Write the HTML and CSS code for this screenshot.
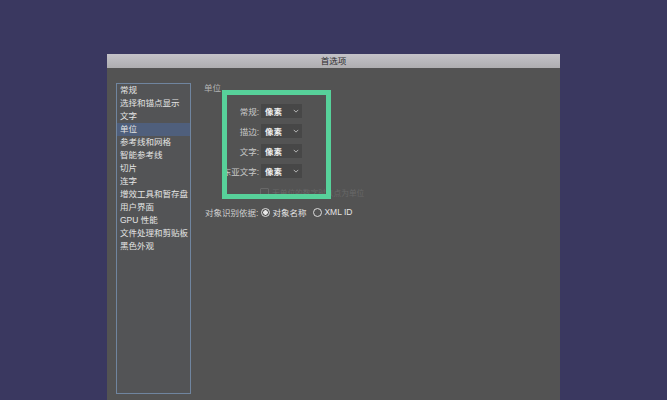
FILE: index.html
```html
<!DOCTYPE html>
<html lang="zh-CN">
<head>
  <meta charset="UTF-8">
  <title>首选项</title>
  <link rel="stylesheet" href="styles.css">
</head>
<body>
  <div class="window">
    <div class="titlebar">首选项</div>
    <div class="content">
      <ul class="sidebar">
        <li>常规</li>
        <li>选择和锚点显示</li>
        <li>文字</li>
        <li class="active">单位</li>
        <li>参考线和网格</li>
        <li>智能参考线</li>
        <li>切片</li>
        <li>连字</li>
        <li>增效工具和暂存盘</li>
        <li>用户界面</li>
        <li>GPU 性能</li>
        <li>文件处理和剪贴板</li>
        <li>黑色外观</li>
      </ul>
      <div class="panel">
        <div class="section-title">单位</div>
        <div class="rows">
          <div class="row"><span class="label">常规:</span><div class="select">像素<svg viewBox="0 0 8 5"><path d="M1 1l3 3 3-3"/></svg></div></div>
          <div class="row"><span class="label">描边:</span><div class="select">像素<svg viewBox="0 0 8 5"><path d="M1 1l3 3 3-3"/></svg></div></div>
          <div class="row"><span class="label">文字:</span><div class="select">像素<svg viewBox="0 0 8 5"><path d="M1 1l3 3 3-3"/></svg></div></div>
          <div class="row"><span class="label">东亚文字:</span><div class="select">像素<svg viewBox="0 0 8 5"><path d="M1 1l3 3 3-3"/></svg></div></div>
        </div>
        <div class="check-row"><span class="checkbox"></span>无单位的数字时以点为单位</div>
        <div class="radio-row">
          <span class="radio-label">对象识别依据:</span>
          <span class="radio on"></span><span class="radio-text">对象名称</span>
          <span class="radio"></span><span class="radio-text">XML ID</span>
        </div>
      </div>
    </div>
    <!-- 绿色标注框 -->
    <div class="highlight"></div>
  </div>
</body>
</html>
```

FILE: styles.css
```css
html, body {
  margin: 0;
  height: 100%;
  overflow: hidden;
}
body {
  background: #3a3860;
  font-family: "Liberation Sans", "Noto Sans CJK SC", sans-serif;
  font-size: 8.5px;
  color: #e4e4e4;
  padding: 54px 107px 0;
  box-sizing: border-box;
}
.window {
  position: relative;
  height: 346px;
  width: 453px;
  background: #535353;
}
.titlebar {
  height: 14px;
  line-height: 14px;
  text-align: center;
  color: #2c2c2c;
  background: linear-gradient(#c4c2c8, #aeadb0);
}
.content {
  display: flex;
  padding: 15px 0 0 9px;
}
.sidebar {
  list-style: none;
  margin: 0;
  padding: 0;
  width: 73px;
  height: 309px;
  border: 1px solid #70859f;
  background: #535456;
}
.sidebar li {
  height: 13px;
  line-height: 13px;
  padding-left: 3px;
  white-space: nowrap;
}
.sidebar li.active {
  background: #4f5f7c;
}
.panel {
  flex: 1;
  padding-left: 13px;
}
.section-title {
  height: 15px;
  color: #b4b4b4;
  line-height: 11px;
}
.rows {
  display: flex;
  flex-direction: column;
  gap: 5px;
  margin-top: 5px;
  width: 98px;
}
.row {
  display: flex;
  justify-content: flex-end;
  align-items: center;
  gap: 2px;
  height: 15px;
}
.label {
  color: #c8c8c8;
  white-space: nowrap;
}
.select {
  display: flex;
  justify-content: space-between;
  align-items: center;
  width: 41px;
  height: 14px;
  padding: 0 3px 0 4px;
  box-sizing: border-box;
  background: #474747;
  color: #efefef;
  font-weight: bold;
}
.select svg {
  width: 6px;
  height: 4px;
  fill: none;
  stroke: #d8d8d8;
  stroke-width: 1;
}
.check-row {
  display: flex;
  align-items: center;
  gap: 3px;
  margin: 8px 0 0 56px;
  height: 12px;
  font-size: 7.7px;
  color: #686868;
  white-space: nowrap;
}
.checkbox {
  width: 7px;
  height: 7px;
  border: 1px solid #686868;
  border-radius: 1px;
}
.radio-row {
  display: flex;
  align-items: center;
  height: 14px;
  margin-top: 7px;
  padding-left: 1px;
  color: #cfcfcf;
  white-space: nowrap;
}
.radio-label {
  margin-right: 3px;
}
.radio {
  width: 7px;
  height: 7px;
  border: 1px solid #dcdcdc;
  border-radius: 50%;
  margin-right: 2px;
}
.radio.on {
  background: radial-gradient(circle, #e8e8e8 2px, #535353 2.5px);
}
.radio-text {
  margin-right: 7px;
  color: #e4e4e4;
}
.highlight {
  position: absolute;
  left: 115px;
  top: 36px;
  width: 99px;
  height: 99px;
  border: 5px solid #57d19a;
}
```
